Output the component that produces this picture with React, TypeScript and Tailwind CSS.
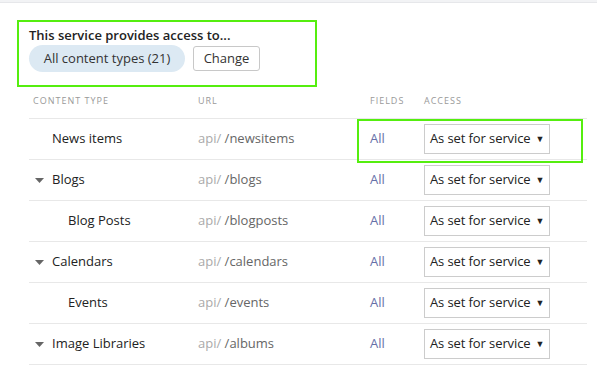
import React from "react";

type Row = { name: string; url: string; parent?: boolean; child?: boolean };

const rows: Row[] = [
  { name: "News items", url: "/newsitems" },
  { name: "Blogs", url: "/blogs", parent: true },
  { name: "Blog Posts", url: "/blogposts", child: true },
  { name: "Calendars", url: "/calendars", parent: true },
  { name: "Events", url: "/events", child: true },
  { name: "Image Libraries", url: "/albums", parent: true },
];

function Caret() {
  return (
    <svg width="9" height="5" viewBox="0 0 9 5" className="mr-[8px]">
      <polygon points="0,0 9,0 4.5,5" fill="#666" />
    </svg>
  );
}

export default function App() {
  return (
    <div className="w-[597px] h-[365px] bg-white overflow-hidden text-[13px] text-[#222]" style={{ fontFamily: '"Open Sans", "Liberation Sans", sans-serif' }}>
      <div className="h-[3px] bg-[#f2f3f5] border-b border-[#e6e7ea]" />

      {/* header section */}
      <div className="ml-[17px] mt-[17px] w-[300px] h-[67px] border-[2px] border-[#55ee0f] pl-[10px] pt-[4px]">
        <div className="font-semibold leading-[18px]">This service provides access to...</div>
        <div className="flex items-center gap-[8px] mt-[1px]">
          <div className="w-[156px] h-[27px] rounded-full bg-[#dce9f3] flex items-center justify-center text-[#333]">
            All content types (21)
          </div>
          <button className="w-[67px] h-[25px] border border-[#c8c8c8] rounded-[3px] bg-white text-[#333] flex items-center justify-center">
            Change
          </button>
        </div>
      </div>

      {/* table */}
      <div className="ml-[29px] w-[558px]">
        <div className="flex h-[32px] items-center pb-[4px] border-b border-[#e8e8e8] text-[9px] tracking-[1px] uppercase text-[#999]">
          <div className="w-[169px] pl-[4px]">Content type</div>
          <div className="w-[172px]">URL</div>
          <div className="w-[54px]">Fields</div>
          <div>Access</div>
        </div>
        {rows.map((r, i) => (
          <div key={r.name} className="relative flex h-[41px] items-center border-b border-[#e8e8e8]">
            <div className={`w-[169px] flex items-center ${r.child ? "pl-[39px]" : r.parent ? "pl-[6px]" : "pl-[23px]"}`}>
              {r.parent && <Caret />}
              <span>{r.name}</span>
            </div>
            <div className="w-[172px]">
              <span className="text-[#aaa]">api/ </span>
              <span className="text-[#666]">{r.url}</span>
            </div>
            <div className="w-[54px] text-[#6670a8]">All</div>
            <div className="w-[126px] h-[30px] border border-[#cccccc] flex items-center whitespace-nowrap pl-[5px] text-[#222]">
              <span className="tracking-[-0.1px]">As set for service</span>
              <span className="text-[9px] ml-[5px]">▼</span>
            </div>
            {i === 0 && (
              <div className="absolute left-[328px] top-0 w-[226px] h-[44px] border-[2px] border-[#55ee0f]" />
            )}
          </div>
        ))}
      </div>
    </div>
  );
}
